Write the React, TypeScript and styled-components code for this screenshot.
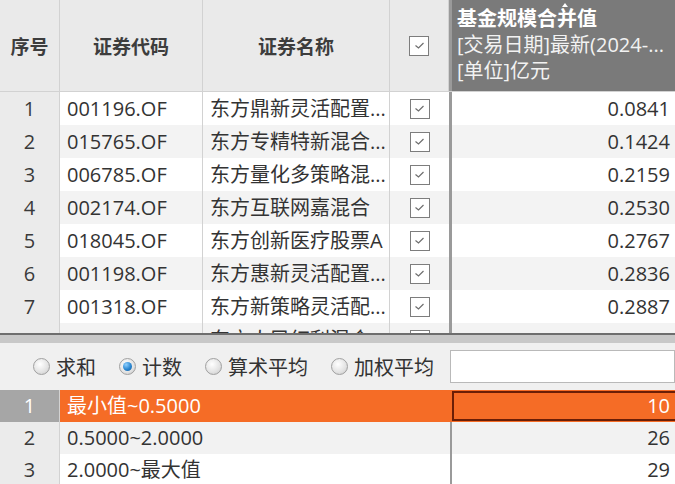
import styled, { createGlobalStyle } from "styled-components";
import React from "react";

const GlobalStyle = createGlobalStyle`
  html, body {
    margin: 0;
    padding: 0;
    background: #f0f0f0;
  }
  body {
    font-family: "Open Sans", "Noto Sans CJK SC", sans-serif;
    color: #333;
  }
`;

interface Fund {
  code: string;
  name: string;
  value: string;
}

const funds: Fund[] = [
  { code: "001196.OF", name: "东方鼎新灵活配置...", value: "0.0841" },
  { code: "015765.OF", name: "东方专精特新混合...", value: "0.1424" },
  { code: "006785.OF", name: "东方量化多策略混...", value: "0.2159" },
  { code: "002174.OF", name: "东方互联网嘉混合", value: "0.2530" },
  { code: "018045.OF", name: "东方创新医疗股票A", value: "0.2767" },
  { code: "001198.OF", name: "东方惠新灵活配置...", value: "0.2836" },
  { code: "001318.OF", name: "东方新策略灵活配...", value: "0.2887" },
  { code: "009869.OF", name: "东方人民红利混合", value: "0.2760" },
];

const groups = [
  { label: "最小值~0.5000", count: "10" },
  { label: "0.5000~2.0000", count: "26" },
  { label: "2.0000~最大值", count: "29" },
];

const radios = [
  { label: "求和", on: false },
  { label: "计数", on: true },
  { label: "算术平均", on: false },
  { label: "加权平均", on: false },
];

const COLS = "60px 143px 187px 59px 1fr";

const Page = styled.div`
  width: 675px;
  height: 484px;
  overflow: hidden;
  display: flex;
  flex-direction: column;
  background: #f0f0f0;
`;

const TopTable = styled.div`
  height: 333px;
  flex-shrink: 0;
  overflow: hidden;
  background: #fff;
`;

const HeaderRow = styled.div`
  display: grid;
  grid-template-columns: ${COLS};
  height: 92px;
  border-bottom: 1px solid #d2d2d2;
  box-sizing: border-box;
`;

const HeadCell = styled.div`
  background: #eaeaea;
  border-right: 1px solid #d2d2d2;
  display: flex;
  align-items: center;
  justify-content: center;
  font-family: "Noto Sans CJK SC", sans-serif;
  font-weight: bold;
  font-size: 19px;
  color: #3d3d3d;
`;

const ValueHead = styled.div`
  position: relative;
  background: #7a7a7a;
  border-left: 3px solid #9a9a9a;
  padding: 6px 0 0 5px;
  display: flex;
  flex-direction: column;
  color: #f2f2f2;
  font-size: 20px;
  line-height: 26px;
  white-space: nowrap;
  overflow: hidden;
`;

const HeadTitle = styled.div`
  font-weight: bold;
  color: #fff;
`;

const SortMark = styled.div`
  position: absolute;
  top: 3px;
  left: 110px;
  width: 0;
  height: 0;
  border-left: 3px solid transparent;
  border-right: 3px solid transparent;
  border-bottom: 4px solid #fff;
`;

const Row = styled.div<{ $alt: boolean }>`
  display: grid;
  grid-template-columns: ${COLS};
  height: 33px;
  background: ${(p) => (p.$alt ? "#f3f3f3" : "#fff")};
  font-size: 20px;
  line-height: 33px;
`;

const IndexCell = styled.div<{ $active?: boolean }>`
  background: ${(p) => (p.$active ? "#a6a6a6" : "#ebebeb")};
  color: ${(p) => (p.$active ? "#fff" : "#3a3a3a")};
  border-right: 1px solid #d2d2d2;
  text-align: center;
`;

const TextCell = styled.div`
  padding-left: 7px;
  border-right: 1px solid #d2d2d2;
  white-space: nowrap;
  overflow: hidden;
  color: #333;
`;

const CheckCell = styled.div`
  display: flex;
  align-items: center;
  justify-content: center;
`;

const Box = styled.div`
  width: 20px;
  height: 20px;
  box-sizing: border-box;
  border: 1px solid #7d7d7d;
  background: #fff;
  display: flex;
  align-items: center;
  justify-content: center;
`;

const NumCell = styled.div`
  border-left: 3px solid #9a9a9a;
  text-align: right;
  padding-right: 5px;
  color: #333;
`;

const Splitter = styled.div`
  height: 10px;
  flex-shrink: 0;
  border-top: 2px solid #6e6e6e;
  background: #c8c8c8;
  box-sizing: border-box;
`;

const Toolbar = styled.div`
  height: 47px;
  flex-shrink: 0;
  display: flex;
  align-items: center;
  padding-left: 33px;
  box-sizing: border-box;
`;

const RadioGroup = styled.div`
  flex: 1;
  display: flex;
  align-items: center;
  gap: 23px;
`;

const RadioItem = styled.div`
  display: flex;
  flex-shrink: 0;
  align-items: center;
  gap: 6px;
  white-space: nowrap;
  font-family: "Noto Sans CJK SC", sans-serif;
  font-size: 20px;
  color: #333;
`;

const RadioDot = styled.div<{ $on: boolean }>`
  width: 17px;
  height: 17px;
  flex-shrink: 0;
  border-radius: 50%;
  box-sizing: border-box;
  border: 1px solid #a0a0a0;
  background: radial-gradient(circle at 40% 35%, #ffffff 0%, #e2e2e2 60%, #c4c4c4 100%);
  display: flex;
  align-items: center;
  justify-content: center;
  &::after {
    content: "";
    display: ${(p) => (p.$on ? "block" : "none")};
    width: 9px;
    height: 9px;
    border-radius: 50%;
    background: radial-gradient(circle at 35% 30%, #8fd0ff 0%, #2a86d0 55%, #105a9c 100%);
  }
`;

const SearchBox = styled.div`
  width: 225px;
  flex-shrink: 0;
  height: 33px;
  box-sizing: border-box;
  border: 1px solid #b9b9b9;
  background: #fff;
`;

const GroupRow = styled.div<{ $bg: string }>`
  display: grid;
  grid-template-columns: 60px 390px 1fr;
  height: 32px;
  flex-shrink: 0;
  line-height: 32px;
  font-size: 20px;
  background: ${(p) => p.$bg};
`;

const GroupLabel = styled.div<{ $active: boolean }>`
  padding-left: 7px;
  color: ${(p) => (p.$active ? "#fff" : "#333")};
`;

const GroupCount = styled.div<{ $active: boolean }>`
  text-align: right;
  padding-right: 5px;
  box-sizing: border-box;
  color: ${(p) => (p.$active ? "#fff" : "#333")};
  border-left: ${(p) => (p.$active ? "none" : "2px solid #9a9a9a")};
  ${(p) =>
    p.$active &&
    `
    margin: 1px 0 1px 2px;
    border: 2px solid #6b1e06;
    border-right: none;
    line-height: 26px;
  `}
`;

function Tick() {
  return (
    <svg width="11" height="9" viewBox="0 0 11 9">
      <path d="M1.5 4.5 L4.5 7 L9.5 2" fill="none" stroke="#6e6e6e" strokeWidth="1.2" />
    </svg>
  );
}

export default function App() {
  return (
    <>
      <GlobalStyle />
      <Page>
        <TopTable>
          <HeaderRow>
            <HeadCell>序号</HeadCell>
            <HeadCell>证券代码</HeadCell>
            <HeadCell>证券名称</HeadCell>
            <HeadCell>
              <Box>
                <Tick />
              </Box>
            </HeadCell>
            <ValueHead>
              <SortMark />
              <HeadTitle>基金规模合并值</HeadTitle>
              <div>[交易日期]最新(2024-...</div>
              <div>[单位]亿元</div>
            </ValueHead>
          </HeaderRow>
          {funds.map((f, i) => (
            <Row key={f.code} $alt={i % 2 === 1}>
              <IndexCell>{i + 1}</IndexCell>
              <TextCell>{f.code}</TextCell>
              <TextCell>{f.name}</TextCell>
              <CheckCell>
                <Box>
                  <Tick />
                </Box>
              </CheckCell>
              <NumCell>{f.value}</NumCell>
            </Row>
          ))}
        </TopTable>
        <Splitter />
        <Toolbar>
          <RadioGroup>
            {radios.map((r) => (
              <RadioItem key={r.label}>
                <RadioDot $on={r.on} />
                {r.label}
              </RadioItem>
            ))}
          </RadioGroup>
          <SearchBox />
        </Toolbar>
        {groups.map((g, i) => (
          <GroupRow key={g.label} $bg={i === 0 ? "#f56c26" : i === 1 ? "#f2f2f2" : "#fff"}>
            <IndexCell $active={i === 0}>{i + 1}</IndexCell>
            <GroupLabel $active={i === 0}>{g.label}</GroupLabel>
            <GroupCount $active={i === 0}>{g.count}</GroupCount>
          </GroupRow>
        ))}
      </Page>
    </>
  );
}
